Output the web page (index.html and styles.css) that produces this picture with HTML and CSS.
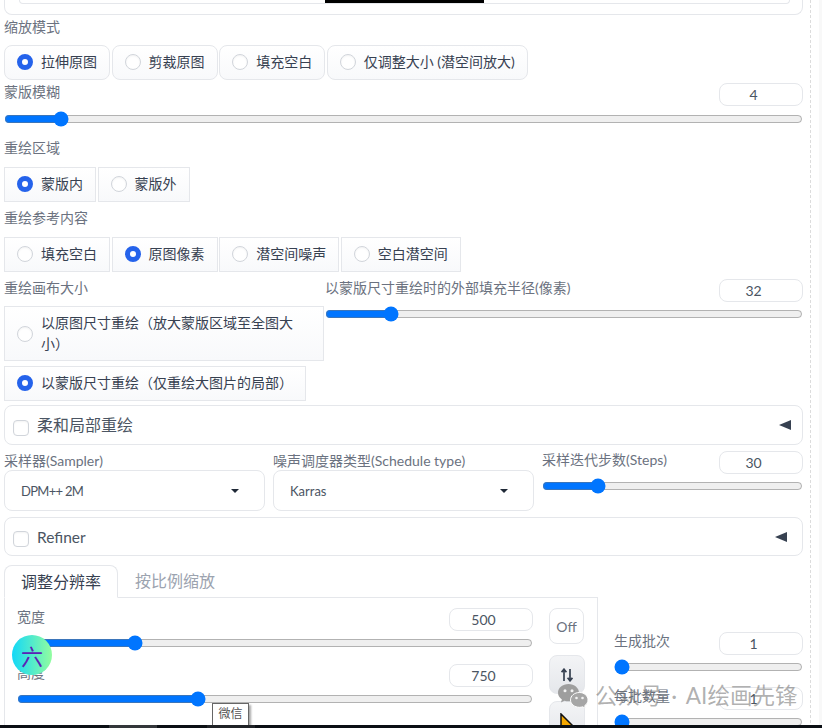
FILE: index.html
```html
<!DOCTYPE html>
<html lang="zh-CN">
<head>
<meta charset="utf-8">
<title>重绘设置</title>
<link rel="stylesheet" href="styles.css">
</head>
<body>
<div class="page">
  <main class="main">
    <div class="top-card"><div class="top-inner"><div class="top-black"></div></div></div>

    <section class="field field-scale">
      <div class="label">缩放模式</div>
      <div class="radios rounded">
        <label class="radio"><input type="radio" name="scale" checked>拉伸原图</label>
        <label class="radio"><input type="radio" name="scale">剪裁原图</label>
        <label class="radio"><input type="radio" name="scale">填充空白</label>
        <label class="radio"><input type="radio" name="scale">仅调整大小 (潜空间放大)</label>
      </div>
    </section>

    <section class="slider slider-blur">
      <div class="slider-head"><span class="label">蒙版模糊</span><input class="num" type="number" value="4"></div>
      <input class="range" type="range" min="0" max="64" value="4">
    </section>

    <section class="field field-area">
      <div class="label">重绘区域</div>
      <div class="radios">
        <label class="radio"><input type="radio" name="area" checked>蒙版内</label>
        <label class="radio"><input type="radio" name="area">蒙版外</label>
      </div>
    </section>

    <section class="field field-content">
      <div class="label">重绘参考内容</div>
      <div class="radios">
        <label class="radio"><input type="radio" name="content">填充空白</label>
        <label class="radio"><input type="radio" name="content" checked>原图像素</label>
        <label class="radio"><input type="radio" name="content">潜空间噪声</label>
        <label class="radio"><input type="radio" name="content">空白潜空间</label>
      </div>
    </section>

    <section class="canvas-row">
      <div class="canvas-left">
        <div class="label">重绘画布大小</div>
        <div class="radios stack">
          <label class="radio"><input type="radio" name="canvas">以原图尺寸重绘（放大蒙版区域至全图大小）</label>
          <label class="radio"><input type="radio" name="canvas" checked>以蒙版尺寸重绘（仅重绘大图片的局部）</label>
        </div>
      </div>
      <div class="slider canvas-right">
        <div class="slider-head"><span class="label">以蒙版尺寸重绘时的外部填充半径(像素)</span><input class="num" type="number" value="32"></div>
        <input class="range" type="range" min="0" max="256" value="32">
      </div>
    </section>

    <section class="accordion acc-soft">
      <input class="check" type="checkbox"><span class="acc-title">柔和局部重绘</span>
      <svg class="acc-arrow" viewBox="0 0 12 10" width="12" height="10"><polygon points="0,5 12,0 12,10"/></svg>
    </section>

    <section class="sampler-row">
      <div class="sampler-col">
        <div class="label label-tight">采样器(Sampler)</div>
        <div class="select select-tight"><span>DPM++ 2M</span><svg viewBox="0 0 8 4" width="8" height="4"><polygon points="0,0 8,0 4,4"/></svg></div>
      </div>
      <div class="sampler-col">
        <div class="label label-tight">噪声调度器类型(Schedule type)</div>
        <div class="select"><span>Karras</span><svg viewBox="0 0 8 4" width="8" height="4"><polygon points="0,0 8,0 4,4"/></svg></div>
      </div>
      <div class="sampler-col slider">
        <div class="slider-head"><span class="label">采样迭代步数(Steps)</span><input class="num" type="number" value="30"></div>
        <input class="range" type="range" min="1" max="150" value="30">
      </div>
    </section>

    <section class="accordion acc-refiner">
      <input class="check" type="checkbox"><span class="acc-title">Refiner</span>
      <svg class="acc-arrow" viewBox="0 0 12 10" width="12" height="10"><polygon points="0,5 12,0 12,10"/></svg>
    </section>

    <section class="gen-row">
      <div class="gen-left">
        <div class="tabs">
          <div class="tab active">调整分辨率</div>
          <div class="tab">按比例缩放</div>
        </div>
        <div class="panel">
          <div class="size-sliders">
            <div class="slider">
              <div class="slider-head"><span class="label">宽度</span><input class="num" type="number" value="500"></div>
              <input class="range" type="range" min="64" max="2048" value="500">
            </div>
            <div class="slider">
              <div class="slider-head"><span class="label">高度</span><input class="num" type="number" value="750"></div>
              <input class="range" type="range" min="64" max="2048" value="750">
            </div>
          </div>
          <div class="size-tools">
            <button class="tool tool-off" type="button">Off</button>
            <button class="tool tool-grey tool-swap" type="button">
              <svg viewBox="0 0 12 14" width="12" height="14"><path d="M3 13V1.5M.6 4.2 3 1.2l2.4 3M9 1v11.5M6.6 9.8 9 12.8l2.4-3"/></svg>
            </button>
            <button class="tool tool-grey tool-cursor" type="button">
              <svg viewBox="0 0 14 14" width="14" height="14"><polygon points="1,1 1,13 13,13"/></svg>
            </button>
          </div>
        </div>
      </div>
      <div class="gen-right">
        <div class="slider">
          <div class="slider-head"><span class="label">生成批次</span><input class="num" type="number" value="1"></div>
          <input class="range" type="range" min="1" max="100" value="1">
        </div>
        <div class="slider">
          <div class="slider-head"><span class="label">每批数量</span><input class="num" type="number" value="1"></div>
          <input class="range" type="range" min="1" max="8" value="1">
        </div>
      </div>
    </section>
  </main>
  <div class="gutter"></div>

  <div class="badge">六</div>
  <div class="tooltip">微信</div>
  <div class="watermark">
    <svg viewBox="0 0 31 24" width="31" height="24">
      <path class="wm-big" d="M10.5 0C4.7 0 0 3.9 0 8.7c0 2.7 1.5 5.1 3.9 6.7L2.9 18.600l3.600-1.900c1.300.4 2.600.6 4 .6 5.800 0 10.500-3.900 10.500-8.600S16.300 0 10.500 0z"/>
      <circle class="wm-eye" cx="7" cy="6.800" r="1.500"/><circle class="wm-eye" cx="14" cy="6.800" r="1.500"/>
      <path class="wm-small" d="M21.500 8.500c-5.100 0-9 3.300-9 7.400s3.900 7.400 9 7.400c1.100 0 2.100-.1 3.100-.5l2.900 1.500-.8-2.600c2-1.400 3.300-3.500 3.300-5.800 0-4.100-3.900-7.400-8.500-7.400z"/>
      <circle class="wm-eye" cx="18.500" cy="14" r="1.300"/><circle class="wm-eye" cx="24.500" cy="14" r="1.300"/>
    </svg>
    <span class="wm-text">公众号 · AI绘画先锋</span>
  </div>
  <div class="taskbar"><span class="task task-a"></span><span class="task task-b"></span></div>
</div>
</body>
</html>
```

FILE: styles.css
```css
* { box-sizing: border-box; }
html, body { margin: 0; padding: 0; height: 100%; overflow: hidden; background: #fff; }
body { font-family: Lato, "Noto Sans CJK SC", "Noto Sans", sans-serif; font-size: 14px; color: #374151; }

.page { position: relative; display: flex; width: 822px; height: 728px; overflow: hidden; background: #fff; }
.main { width: 811px; height: 728px; padding: 0 7px 0 4px; border-right: 1px dashed #dcdcdc; overflow: hidden; flex: none; }
.gutter { width: 3px; height: 100%; margin-left: auto; background: #f8f8f8; }

.top-card { height: 15px; padding: 0 12px 0 14px; border: 1px solid #e5e7eb; border-top: 0; border-radius: 0 0 8px 8px; }
.top-inner { display: flex; justify-content: center; height: 4px; border: 1px solid #e5e7eb; border-top: 0; border-radius: 0 0 6px 6px; }
.top-black { width: 159px; height: 3px; background: #000; }

.label { height: 20px; line-height: 20px; color: #6b7280; font-size: 14px; white-space: nowrap; }
.label-tight { height: 19px; line-height: 19px; }

.radios { display: flex; gap: 1.6px; margin-top: 8px; }
.radio { display: flex; align-items: center; gap: 8px; padding: 6px 12px; line-height: 20.5px; border: 1px solid #e5e7eb; background: linear-gradient(#fff, #f8f9fb); color: #374151; white-space: nowrap; }
.rounded .radio { border-radius: 8px; }
.stack { flex-direction: column; align-items: flex-start; gap: 5px; }
.stack .radio { white-space: normal; }
.stack .radio:first-child { width: 320px; }
.radio input { appearance: none; flex: none; width: 16px; height: 16px; margin: 0; border: 1px solid #d1d5db; border-radius: 50%; background: #fff; box-shadow: inset 0 1px 2px rgba(0, 0, 0, .05); }
.radio input:checked { border: 5px solid #2563eb; box-shadow: none; }

.field-scale { margin-top: 2px; }
.slider-blur { margin-top: 3.5px; }
.slider-blur .range { margin-top: 5px; }
.field-area { margin-top: 11px; }
.field-area .radios, .field-content .radios { margin-top: 9px; }
.field-content { margin-top: 6.5px; }

.slider-head { display: flex; justify-content: space-between; align-items: flex-start; height: 23px; }
.slider-head .label { margin-top: -1px; }
.num { width: 84px; height: 23px; margin: 0; padding: 0 2px; border: 1px solid #e5e7eb; border-radius: 8px; background: #fff; color: #4b5563; font: 14px/21px Lato, "Noto Sans CJK SC", sans-serif; text-align: center; outline: 0; }
.range { display: block; width: 100%; height: 16px; margin: 4px 0 0; }

.canvas-row { display: flex; gap: 1px; margin-top: 6.5px; }
.canvas-left { flex: 0 0 320px; }
.canvas-right { flex: 1; margin-top: 1px; }

.accordion { display: flex; align-items: center; border: 1px solid #e5e7eb; border-radius: 8px; padding-left: 8px; }
.acc-soft { height: 40px; margin-top: 4.5px; padding-right: 11px; }
.acc-refiner { height: 39px; margin-top: 6px; padding-right: 15px; }
.check { appearance: none; flex: none; width: 16px; height: 16px; margin: 5px 8px 0 0; border: 1px solid #d1d5db; border-radius: 4px; background: #fff; box-shadow: inset 0 1px 2px rgba(0, 0, 0, .05); }
.acc-title { font-size: 16px; line-height: 22px; color: #4b5563; }
.acc-refiner .acc-title { font-size: 15.500px; }
.acc-arrow { margin-left: auto; fill: #374151; }

.sampler-row { display: flex; gap: 8px; margin-top: 6px; height: 60px; }
.sampler-col { flex: 1; min-width: 0; }
.select { display: flex; align-items: center; justify-content: space-between; height: 41px; padding: 0 25px 0 16px; border: 1px solid #e5e7eb; border-radius: 8px; font-size: 13px; color: #4b5563; }
.select-tight { letter-spacing: -.7px; }
.select svg { fill: #1f2937; }

.gen-row { display: flex; gap: 16px; margin-top: 9px; }
.gen-left { flex: 0 0 594px; }
.tabs { display: flex; height: 33px; margin-bottom: -1px; }
.tab { position: relative; padding: 0 17px; font-size: 16px; line-height: 32px; color: #9ca3af; white-space: nowrap; }
.tab.active { padding: 0 16px; border: 1px solid #e5e7eb; border-bottom: 1px solid #fff; border-radius: 8px 8px 0 0; background: #fff; color: #374151; }
.panel { display: flex; gap: 16px; height: 130px; padding: 10px 12px 0 12px; border: 1px solid #e5e7eb; border-bottom: 0; }
.size-sliders { display: flex; flex-direction: column; gap: 13px; width: 516px; }
.size-tools { display: flex; flex-direction: column; width: 36px; }
.tool { display: flex; align-items: center; justify-content: center; flex: none; width: 36px; padding: 0; border: 1px solid #e5e7eb; border-radius: 8px; background: #fff; font: 14px Lato, "Noto Sans CJK SC", sans-serif; color: #6b7280; }
.tool-off { height: 36px; width: 35px; }
.tool-grey { background: linear-gradient(#f3f4f6, #e5e7eb); }
.tool-swap { height: 39px; margin-top: 11px; }
.tool-swap svg { fill: none; stroke: #374151; stroke-width: 1.700; }
.tool-cursor { align-items: flex-start; height: 39px; margin-top: 7px; padding: 11px 0 0 0; }
.tool-cursor svg { fill: #f5a800; stroke: #111; stroke-width: 1.500; }

.gen-right { flex: 1; display: flex; flex-direction: column; gap: 12px; padding-top: 67px; }

.badge { position: absolute; left: 12px; top: 635px; width: 40px; height: 40px; border-radius: 50%; background: linear-gradient(90deg, #12d8f8, #92fd9f); color: #5b21b6; font-family: "Noto Sans CJK SC", sans-serif; font-size: 22px; line-height: 40px; text-align: center; }
.tooltip { position: absolute; left: 212px; top: 703px; width: 37px; height: 23px; border: 1px solid #666; background: #fff; box-shadow: 2px 2px 2px rgba(0, 0, 0, .35); color: #555; font-size: 12px; line-height: 20px; text-align: center; }
.watermark { position: absolute; left: 558px; top: 683px; display: flex; align-items: center; gap: 6px; height: 25px; }
.wm-text { font-size: 22.500px; line-height: 25px; word-spacing: 3px; color: rgba(110, 110, 110, .55); white-space: nowrap; }
.wm-big { fill: #9e9e9e; }
.wm-small { fill: #a6a6a6; stroke: #fff; stroke-width: 1; }
.wm-eye { fill: #f2f2f2; }
.taskbar { position: absolute; left: 0; right: 0; bottom: 0; height: 3px; background: #0b0f14; }
.task { position: absolute; top: 0; width: 48px; height: 3px; }
.task-a { left: 109px; background: #33363a; }
.task-b { left: 207px; background: #1f2226; }
```
